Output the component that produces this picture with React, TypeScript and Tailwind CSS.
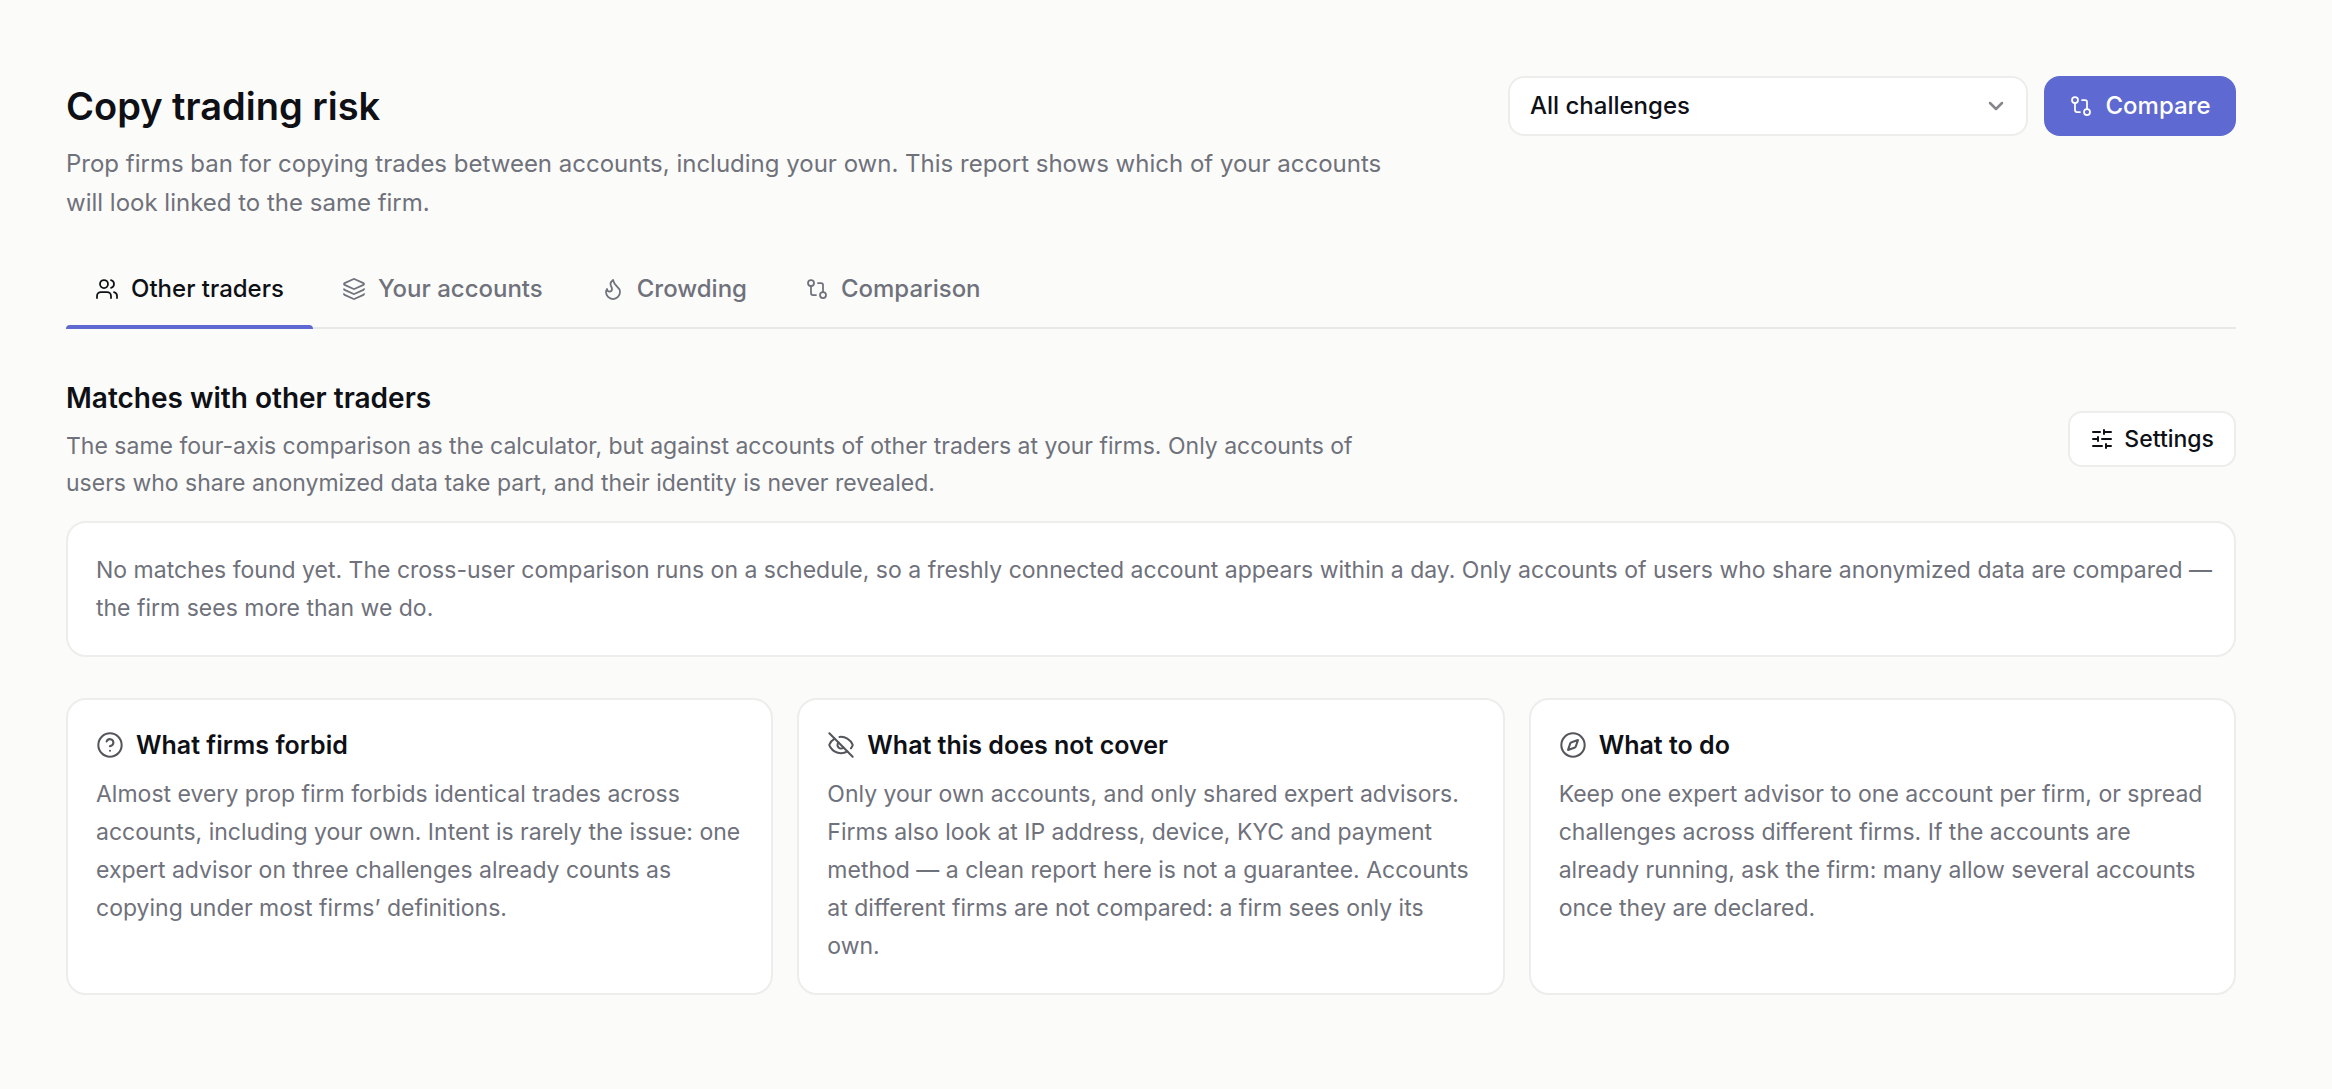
import React from "react";
import {
  ChevronDown,
  CircleHelp,
  Compass,
  EyeOff,
  Flame,
  GitCompare,
  Layers,
  SlidersHorizontal,
  Users,
  type LucideIcon,
} from "lucide-react";

interface Tab {
  id: string;
  label: string;
  icon: LucideIcon;
}

interface InfoCardProps {
  icon: LucideIcon;
  title: string;
  text: string;
}

const tabs: Tab[] = [
  { id: "traders", label: "Other traders", icon: Users },
  { id: "accounts", label: "Your accounts", icon: Layers },
  { id: "crowding", label: "Crowding", icon: Flame },
  { id: "comparison", label: "Comparison", icon: GitCompare },
];

const infoCards: InfoCardProps[] = [
  {
    icon: CircleHelp,
    title: "What firms forbid",
    text: "Almost every prop firm forbids identical trades across accounts, including your own. Intent is rarely the issue: one expert advisor on three challenges already counts as copying under most firms’ definitions.",
  },
  {
    icon: EyeOff,
    title: "What this does not cover",
    text: "Only your own accounts, and only shared expert advisors. Firms also look at IP address, device, KYC and payment method — a clean report here is not a guarantee. Accounts at different firms are not compared: a firm sees only its own.",
  },
  {
    icon: Compass,
    title: "What to do",
    text: "Keep one expert advisor to one account per firm, or spread challenges across different firms. If the accounts are already running, ask the firm: many allow several accounts once they are declared.",
  },
];

const InfoCard: React.FC<InfoCardProps> = ({ icon: Icon, title, text }) => (
  <article className="rounded-[20px] border-2 border-[#ededec] bg-white px-7 pt-[25px] pb-7">
    <h3 className="flex items-center gap-3 text-[25px] leading-[40px] font-semibold">
      <Icon className="size-7 shrink-0 text-[#55565c]" strokeWidth={1.75} />
      {title}
    </h3>
    <p className="mt-[10px] text-[23px] leading-[38px] text-[#6f717b]">{text}</p>
  </article>
);

const App: React.FC = () => {
  const [active, setActive] = React.useState("traders");

  return (
    <main className="min-h-screen bg-[#fbfbf9] pt-[76px] pr-24 pb-20 pl-[66px] font-['Inter','Liberation_Sans',sans-serif] text-[#0e1015]">
      <header className="flex items-start justify-between gap-8">
        <div>
          <h1 className="text-[38px] leading-[60px] font-semibold">Copy trading risk</h1>
          <p className="mt-2 max-w-[1344px] text-[24px] leading-[39px] text-[#6f717b]">
            Prop firms ban for copying trades between accounts, including your own. This report shows which of your accounts will look linked to the same firm.
          </p>
        </div>
        <div className="flex shrink-0 gap-4">
          <div className="relative">
            <select
              aria-label="Challenge"
              className="h-[60px] w-[520px] appearance-none rounded-[16px] border-2 border-[#ededec] bg-white px-5 text-[24px] font-medium"
            >
              <option>All challenges</option>
            </select>
            <ChevronDown
              className="pointer-events-none absolute top-[18px] right-5 size-6 text-[#85868a]"
              strokeWidth={2.5}
            />
          </div>
          <button
            type="button"
            className="flex h-[60px] w-[192px] items-center justify-center gap-3 rounded-[16px] bg-[#5e69d1] text-[24px] font-medium text-white"
          >
            <GitCompare className="size-6" strokeWidth={1.75} />
            Compare
          </button>
        </div>
      </header>

      <div role="tablist" className="mt-7 flex border-b-2 border-[#e8e8e6]">
        {tabs.map(({ id, label, icon: Icon }) => (
          <button
            key={id}
            type="button"
            role="tab"
            aria-selected={active === id}
            onClick={() => setActive(id)}
            className={`relative flex h-[77px] items-center gap-3 px-[29px] text-[24px] font-medium ${active === id ? "text-[#0e1015]" : "text-[#6f717b]"}`}
          >
            <Icon className="size-6" strokeWidth={1.75} />
            {label}
            {active === id && (
              <span className="absolute inset-x-0 -bottom-[2px] h-1 rounded-t-[4px] bg-[#5e69d1]" />
            )}
          </button>
        ))}
      </div>

      <section className="mt-[47px]">
        <div className="flex items-center justify-between gap-8">
          <div>
            <h2 className="text-[28px] leading-[44px] font-semibold">Matches with other traders</h2>
            <p className="mt-2 max-w-[1344px] text-[23px] leading-[37px] text-[#6f717b]">
              The same four-axis comparison as the calculator, but against accounts of other traders at your firms. Only accounts of users who share anonymized data take part, and their identity is never revealed.
            </p>
          </div>
          <button
            type="button"
            className="flex h-14 shrink-0 items-center gap-[10px] rounded-[14px] border-2 border-[#ededec] bg-white px-5 text-[23px] font-medium"
          >
            <SlidersHorizontal className="size-6" />
            Settings
          </button>
        </div>
        <p className="mt-[19px] rounded-[20px] border-2 border-[#ededec] bg-white py-7 pr-4 pl-7 text-[23px] leading-[38px] text-[#6f717b]">
          No matches found yet. The cross-user comparison runs on a schedule, so a freshly connected account appears within a day. Only accounts of users who share anonymized data are compared — the firm sees more than we do.
        </p>
      </section>

      <section className="mt-[41px] grid grid-cols-3 gap-6">
        {infoCards.map((card) => (
          <InfoCard key={card.title} {...card} />
        ))}
      </section>
    </main>
  );
};

export default App;
